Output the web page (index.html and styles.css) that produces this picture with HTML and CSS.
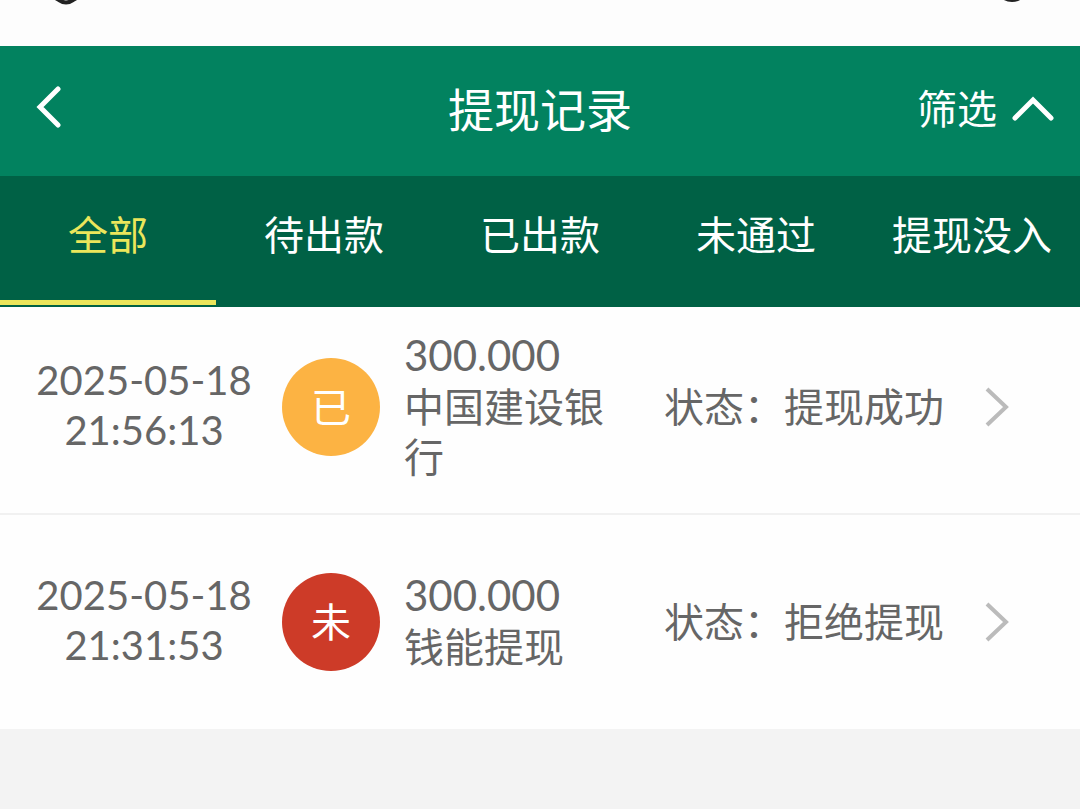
FILE: index.html
```html
<!DOCTYPE html>
<html lang="zh-CN">
<head>
<meta charset="utf-8">
<meta name="viewport" content="width=device-width, initial-scale=1">
<title>提现记录</title>
<link rel="stylesheet" href="styles.css">
</head>
<body>
<div class="topbar">
  <svg class="topbar-icon" viewBox="0 0 28 46" aria-hidden="true"><path d="M0 -4L7 0Q14 5 21 0L28 -4" fill="none" stroke="#222" stroke-width="4"/></svg>
  <svg class="topbar-icon" viewBox="0 0 28 46" aria-hidden="true"><circle cx="14" cy="-15" r="15" fill="none" stroke="#222" stroke-width="4"/></svg>
</div>
<header class="header">
  <button class="back" type="button" aria-label="返回"><svg width="26" height="42" viewBox="0 0 26 42"><path d="M22 3L4 21L22 39"/></svg></button>
  <h1 class="title">提现记录</h1>
  <button class="filter" type="button">筛选<svg width="42" height="28" viewBox="0 0 42 28"><path d="M3 25L21 7L39 25"/></svg></button>
</header>
<nav class="tabs">
  <button class="tab tab-active" type="button">全部</button>
  <button class="tab" type="button">待出款</button>
  <button class="tab" type="button">已出款</button>
  <button class="tab" type="button">未通过</button>
  <button class="tab" type="button">提现没入</button>
</nav>
<main class="records">
  <a class="record" href="#">
    <time class="time">2025-05-18<br>21:56:13</time>
    <span class="badge badge-paid">已</span>
    <span class="detail"><span class="amount">300.000</span><span class="source">中国建设银行</span></span>
    <span class="status">状态：提现成功</span>
    <svg class="chevron" viewBox="0 0 26 42" aria-hidden="true"><path d="M3 3L22 21L3 39"/></svg>
  </a>
  <a class="record" href="#">
    <time class="time">2025-05-18<br>21:31:53</time>
    <span class="badge badge-failed">未</span>
    <span class="detail"><span class="amount">300.000</span><span class="source">钱能提现</span></span>
    <span class="status">状态：拒绝提现</span>
    <svg class="chevron" viewBox="0 0 26 42" aria-hidden="true"><path d="M3 3L22 21L3 39"/></svg>
  </a>
</main>
</body>
</html>
```

FILE: styles.css
```css
* { box-sizing: border-box; }
body {
  margin: 0;
  background: #f3f3f3;
  color: #666;
  font: 40px/50px "Noto Sans CJK SC", sans-serif;
}
button { padding: 0; border: 0; background: none; color: inherit; font: inherit; }
.topbar {
  display: flex;
  justify-content: space-between;
  height: 46px;
  padding: 0 54px 0 52px;
  background: #fdfdfd;
}
.topbar-icon { width: 28px; height: 46px; }
.header {
  display: grid;
  grid-template-columns: 1fr auto 1fr;
  align-items: center;
  height: 130px;
  padding: 0 26px 8px;
  background: #02825f;
  color: #fff;
}
.header svg {
  fill: none;
  stroke: #fff;
  stroke-width: 5;
  stroke-linecap: round;
}
.back { display: flex; justify-self: start; padding-left: 10px; }
.title { margin: 0; font-size: 46px; font-weight: 400; }
.filter { display: flex; align-items: center; justify-self: end; gap: 15px; }
.tabs {
  display: grid;
  grid-template-columns: repeat(5, 1fr);
  height: 131px;
  padding-bottom: 2px;
  background: #006145;
  color: #fff;
}
.tab { padding-bottom: 10px; border-bottom: 5px solid transparent; white-space: nowrap; }
.tab-active { border-color: #ebe65b; color: #ebe65b; }
.records { background: #fefefe; }
.record {
  display: grid;
  grid-template-columns: 228px 98px 1fr 280px 42px;
  column-gap: 24px;
  align-items: center;
  min-height: 208px;
  padding: 0 70px 6px 30px;
  border-bottom: 2px solid #f1f1f1;
  color: inherit;
  text-decoration: none;
}
.record:last-child { min-height: 214px; padding-bottom: 0; border: 0; }
.time, .amount { font-family: Lato, sans-serif; }
.time { padding-bottom: 4px; text-align: center; white-space: nowrap; }
.amount { font-size: 42px; }
.badge {
  display: flex;
  align-items: center;
  justify-content: center;
  height: 98px;
  padding-bottom: 4px;
  border-radius: 50%;
  color: #fff;
}
.badge-paid { background: #fcb343; }
.badge-failed { background: #cd3b28; }
.detail { display: grid; justify-items: start; padding-bottom: 4px; }
.source { max-width: 5em; }
.status { padding-bottom: 4px; white-space: nowrap; }
.chevron { justify-self: end; width: 26px; height: 42px; fill: none; stroke: #bbb; stroke-width: 4; }
```
